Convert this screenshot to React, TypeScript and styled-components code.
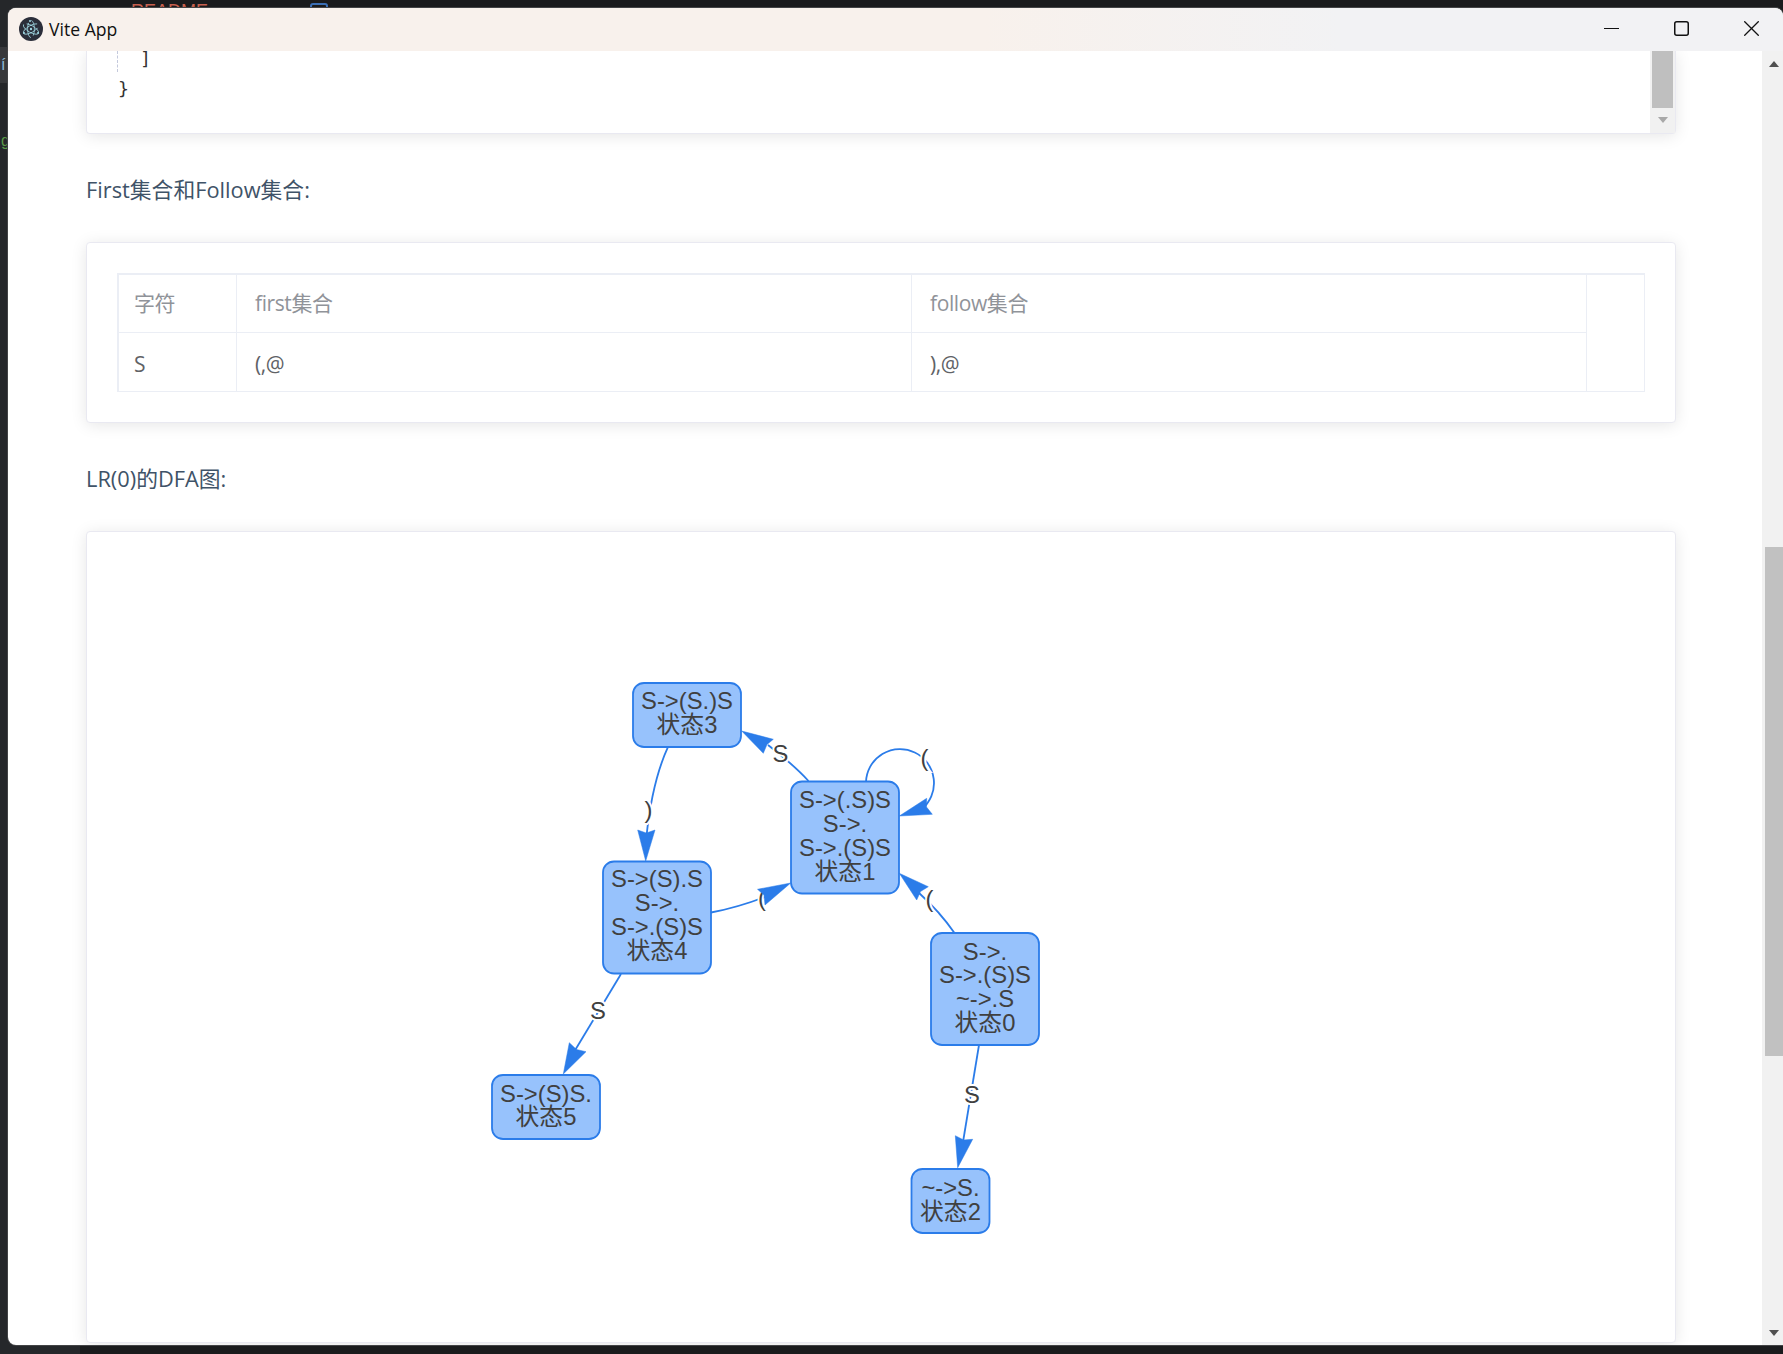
import React from "react";
import styled, { createGlobalStyle } from "styled-components";

const GlobalStyle = createGlobalStyle`
  html, body {
    margin: 0;
    padding: 0;
    width: 1783px;
    height: 1354px;
    overflow: hidden;
    background: #1a1b1d;
  }
`;

const Desktop = styled.div`
  position: relative;
  width: 1783px;
  height: 1354px;
  padding: 8px 0 9px 8px;
  box-sizing: border-box;
  display: flex;
  background: #1a1b1d;
  overflow: hidden;
`;

const BehindRail = styled.div`
  position: absolute;
  left: 0;
  top: 0;
  width: 80px;
  height: 100%;
  background: #25272a;
`;

const BehindRow = styled.div`
  position: absolute;
  left: 0;
  top: 47px;
  width: 10px;
  height: 36px;
  background: #37383b;
`;

const BehindTab = styled.span`
  position: absolute;
  left: 131px;
  top: 1px;
  color: #c7604f;
  font: 18px "Liberation Sans", sans-serif;
`;

const BehindBadge = styled.div`
  position: absolute;
  left: 310px;
  top: 3px;
  width: 14px;
  height: 14px;
  border: 2px solid #3b6fb5;
  border-radius: 3px;
`;

const BehindGlyph = styled.span<{ $top: number; $color: string }>`
  position: absolute;
  left: 1px;
  top: ${(p) => p.$top}px;
  color: ${(p) => p.$color};
  font: 16px "Liberation Sans", sans-serif;
`;

const Window = styled.div`
  position: relative;
  flex: 1;
  display: flex;
  flex-direction: column;
  min-width: 0;
  background: #fff;
  border-radius: 8px 8px 0 8px;
  box-shadow: 0 0 0 1px #434446;
  overflow: hidden;
`;

const TitleBar = styled.div`
  height: 43px;
  flex: none;
  display: flex;
  align-items: center;
  box-sizing: border-box;
  background: linear-gradient(90deg, #f8f1ec 0%, #f8f1ec 55%, #f2f2f4 75%, #f2f2f4 100%);
  padding: 0 0 2px 11px;
`;

const AppIcon = styled.svg`
  width: 24px;
  height: 24px;
  flex: none;
`;

const AppTitle = styled.span`
  margin-left: 6px;
  font: 17.6px "Open Sans", "Noto Sans", sans-serif;
  color: #111;
`;

const WindowButtons = styled.div`
  margin-left: auto;
  margin-right: -3.5px;
  display: flex;
  flex: none;
`;

const WindowButton = styled.div`
  width: 70px;
  height: 41px;
  display: flex;
  align-items: center;
  justify-content: center;
`;

const Body = styled.div`
  flex: 1;
  min-height: 0;
  display: flex;
`;

const Page = styled.div`
  flex: 1;
  min-width: 0;
  padding: 0 86px 0 78px;
  display: flex;
  flex-direction: column;
  overflow: hidden;
`;

const Card = styled.div`
  flex: none;
  box-sizing: border-box;
  background: #fff;
  border: 1px solid #e9e9f1;
  border-radius: 4px;
  box-shadow: 0 2px 16px rgba(0, 0, 0, 0.1);
`;

const CodeCard = styled(Card)`
  height: 83px;
  border-top: 0;
  border-radius: 0 0 4px 4px;
  display: flex;
`;

const CodeArea = styled.div`
  flex: 1;
  padding-left: 30px;
  font: 18.3px/30px "DejaVu Sans Mono", "Liberation Mono", monospace;
  color: #333;
`;

const GuideLine = styled.div`
  height: 21px;
  margin-bottom: 2px;
  line-height: 16px;
  white-space: pre;
  border-left: 1px dashed #c4c9dc;
`;

const CodeLine = styled.div`
  height: 30px;
  white-space: pre;
  border-left: 1px solid transparent;
`;

const CodeScroll = styled.div`
  width: 25px;
  flex: none;
  background: #f1f1f1;
  display: flex;
  flex-direction: column;
  align-items: center;
`;

const CodeThumb = styled.div`
  width: 21px;
  height: 57px;
  flex: none;
  background: #bfbfbf;
`;

const ArrowDown = styled.div<{ $color: string; $gap: number }>`
  margin-top: ${(p) => p.$gap}px;
  width: 0;
  height: 0;
  border-left: 5.5px solid transparent;
  border-right: 5.5px solid transparent;
  border-top: 6px solid ${(p) => p.$color};
`;

const ArrowUp = styled.div`
  margin-top: 10px;
  width: 0;
  height: 0;
  border-left: 5.5px solid transparent;
  border-right: 5.5px solid transparent;
  border-bottom: 6px solid #505050;
`;

const Caption = styled.p`
  margin: 0;
  flex: none;
  height: 108px;
  display: flex;
  align-items: center;
  font: 21.8px "Open Sans", "Noto Sans CJK SC", sans-serif;
  color: #3f5368;
`;

const TableCard = styled(Card)`
  height: 181px;
  padding: 30px 30px 29px;
`;

const Table = styled.div`
  height: 119px;
  box-sizing: border-box;
  border: 1px solid #ebeef5;
  border-top-width: 2px;
  border-left-width: 2px;
  display: grid;
  grid-template-columns: 118px 675px 675px 1fr;
  grid-template-rows: 58px 58px;
`;

const Cell = styled.div<{ $head?: boolean; $lead?: boolean }>`
  display: flex;
  align-items: center;
  padding: ${(p) => (p.$head ? "0 0 4px" : "3px 0 0")};
  padding-left: ${(p) => (p.$lead ? "15px" : "18px")};
  box-sizing: border-box;
  border-right: 1px solid #ebeef5;
  border-bottom: ${(p) => (p.$head ? "1px solid #ebeef5" : "0")};
  color: ${(p) => (p.$head ? "#909399" : "#606266")};
  font: 21px "Open Sans", "Noto Sans CJK SC", sans-serif;
  letter-spacing: -0.4px;
`;

const SpanCell = styled.div`
  grid-column: 4;
  grid-row: 1 / span 2;
`;

const GraphCard = styled(Card)`
  height: 812px;
`;

const Graph = styled.svg`
  display: block;
  width: 100%;
  height: 100%;
`;

const NodeBox = styled.rect`
  fill: #97c2fc;
  stroke: #2b7ce9;
  stroke-width: 1.8;
`;

const NodeText = styled.text`
  font-family: "Liberation Sans", "Noto Sans CJK SC", sans-serif;
  font-size: 23.8px;
  fill: #404040;
  text-anchor: middle;
`;

const EdgeLine = styled.path`
  fill: none;
  stroke: #2b7ce9;
  stroke-width: 1.8;
`;

const ArrowHead = styled.polygon`
  fill: #2b7ce9;
  stroke: #2b7ce9;
  stroke-width: 0.5;
`;

const EdgeLabel = styled.text`
  font-family: "Liberation Sans", sans-serif;
  font-size: 23.8px;
  fill: #404040;
  text-anchor: middle;
  stroke: #fff;
  stroke-width: 4px;
  paint-order: stroke;
`;

const PageScroll = styled.div`
  width: 21px;
  flex: none;
  box-sizing: border-box;
  padding-left: 3px;
  background: #f1f1f1;
  display: flex;
  flex-direction: column;
  align-items: center;
`;

const PageThumb = styled.div`
  width: 18px;
  height: 509px;
  margin-top: 480px;
  flex: none;
  background: #c1c1c1;
`;

type NodeDef = { x: number; y: number; w: number; h: number; lines: [string, number][] };

const nodes: NodeDef[] = [
  { x: 633, y: 683, w: 108, h: 64, lines: [["S->(S.)S", 709], ["状态3", 733]] },
  {
    x: 603, y: 861.5, w: 108, h: 112,
    lines: [["S->(S).S", 887], ["S->.", 911], ["S->.(S)S", 935], ["状态4", 959]],
  },
  {
    x: 791, y: 781.5, w: 108, h: 112,
    lines: [["S->(.S)S", 808], ["S->.", 832], ["S->.(S)S", 856], ["状态1", 880]],
  },
  {
    x: 931, y: 933, w: 108, h: 112,
    lines: [["S->.", 960], ["S->.(S)S", 983], ["~->.S", 1007], ["状态0", 1031]],
  },
  { x: 492, y: 1075, w: 108, h: 64, lines: [["S->(S)S.", 1102], ["状态5", 1125]] },
  { x: 911.5, y: 1169, w: 78, h: 64, lines: [["~->S.", 1196], ["状态2", 1220]] },
];

const edges = [
  "M667.7 747.7 Q652 782 646.3 838",
  "M808.5 781 Q795 766 768 745",
  "M711 912.5 Q740 907 770 895",
  "M954.5 933 Q940 912 918 892",
  "M866 782 A34 34 0 1 1 922 809",
  "M621 974 L574 1052",
  "M979 1045 L963 1142",
];

const heads = [
  "645.7,861 637.7,830 646.3,833 655,830",
  "741.7,731 773.3,739.3 767,744.5 763.3,753.3",
  "790.7,883 757.5,889.3 764,895 765,905",
  "899.3,873.3 928.3,886.7 920.5,891.5 916.7,900",
  "899.3,816 926.7,798.3 926.5,807 932.3,814.3",
  "563.3,1074 569.3,1042.7 576.5,1049.5 586,1051.7",
  "957.7,1167.7 955.3,1135.7 963.7,1140 972.7,1139.3",
];

const labels: [string, number, number][] = [
  [")", 648.5, 818],
  ["S", 780.5, 762],
  ["(", 762, 906],
  ["(", 929.5, 907],
  ["(", 924.5, 766],
  ["S", 598, 1019],
  ["S", 972, 1103],
];

function DfaGraph() {
  return (
    <Graph viewBox="87 532 1588 810">
      {edges.map((d) => (
        <EdgeLine key={d} d={d} />
      ))}
      {nodes.map((n) => (
        <g key={n.lines[n.lines.length - 1][0]}>
          <NodeBox x={n.x} y={n.y} width={n.w} height={n.h} rx={11} />
          {n.lines.map(([text, baseline]) => (
            <NodeText key={text} x={n.x + n.w / 2} y={baseline}>
              {text}
            </NodeText>
          ))}
        </g>
      ))}
      {labels.map(([text, x, y]) => (
        <EdgeLabel key={`${x}-${y}`} x={x} y={y}>
          {text}
        </EdgeLabel>
      ))}
      {heads.map((p) => (
        <ArrowHead key={p} points={p} />
      ))}
    </Graph>
  );
}

function ElectronIcon() {
  return (
    <AppIcon viewBox="0 0 24 24">
      <circle cx="12" cy="12" r="12" fill="#2b2e3a" />
      <g fill="none" stroke="#9fd6e2" strokeWidth="0.8">
        <ellipse cx="12" cy="12" rx="8.6" ry="3.4" transform="rotate(30 12 12)" strokeDasharray="20 3" />
        <ellipse cx="12" cy="12" rx="8.6" ry="3.4" transform="rotate(90 12 12)" strokeDasharray="16 4" />
        <ellipse cx="12" cy="12" rx="8.6" ry="3.4" transform="rotate(150 12 12)" strokeDasharray="18 5" />
      </g>
      <circle cx="12" cy="12" r="1.2" fill="#9fd6e2" />
      <circle cx="11" cy="4" r="1" fill="#9fd6e2" />
      <circle cx="5" cy="16" r="1" fill="#9fd6e2" />
      <circle cx="19" cy="16" r="1" fill="#9fd6e2" />
    </AppIcon>
  );
}

export default function App() {
  return (
    <>
      <GlobalStyle />
      <Desktop>
        <BehindRail />
        <BehindRow />
        <BehindTab>README</BehindTab>
        <BehindBadge />
        <BehindGlyph $top={56} $color="#8fb8d8">
          í
        </BehindGlyph>
        <BehindGlyph $top={132} $color="#5a9a48">
          g
        </BehindGlyph>
        <Window>
          <TitleBar>
            <ElectronIcon />
            <AppTitle>Vite App</AppTitle>
            <WindowButtons>
              <WindowButton>
                <svg width="15" height="15" viewBox="0 0 15 15">
                  <path d="M0 7.5h15" stroke="#111" strokeWidth="1" />
                </svg>
              </WindowButton>
              <WindowButton>
                <svg width="15" height="15" viewBox="0 0 15 15">
                  <rect x="0.75" y="0.75" width="13.5" height="13.5" rx="2" fill="none" stroke="#111" strokeWidth="1.5" />
                </svg>
              </WindowButton>
              <WindowButton>
                <svg width="15" height="15" viewBox="0 0 15 15">
                  <path d="M0.3 0.3l14.4 14.4M14.7 0.3l-14.4 14.4" stroke="#111" strokeWidth="1.3" />
                </svg>
              </WindowButton>
            </WindowButtons>
          </TitleBar>
          <Body>
            <Page>
              <CodeCard>
                <CodeArea>
                  <GuideLine>{"  ]"}</GuideLine>
                  <CodeLine>{"}"}</CodeLine>
                </CodeArea>
                <CodeScroll>
                  <CodeThumb />
                  <ArrowDown $color="#a8a8a8" $gap={9} />
                </CodeScroll>
              </CodeCard>
              <Caption>First集合和Follow集合:</Caption>
              <TableCard>
                <Table>
                  <Cell $head $lead>字符</Cell>
                  <Cell $head>first集合</Cell>
                  <Cell $head>follow集合</Cell>
                  <SpanCell />
                  <Cell $lead>S</Cell>
                  <Cell>(,@</Cell>
                  <Cell>),@</Cell>
                </Table>
              </TableCard>
              <Caption>LR(0)的DFA图:</Caption>
              <GraphCard>
                <DfaGraph />
              </GraphCard>
            </Page>
            <PageScroll>
              <ArrowUp />
              <PageThumb />
              <ArrowDown $color="#505050" $gap={274} />
            </PageScroll>
          </Body>
        </Window>
      </Desktop>
    </>
  );
}
